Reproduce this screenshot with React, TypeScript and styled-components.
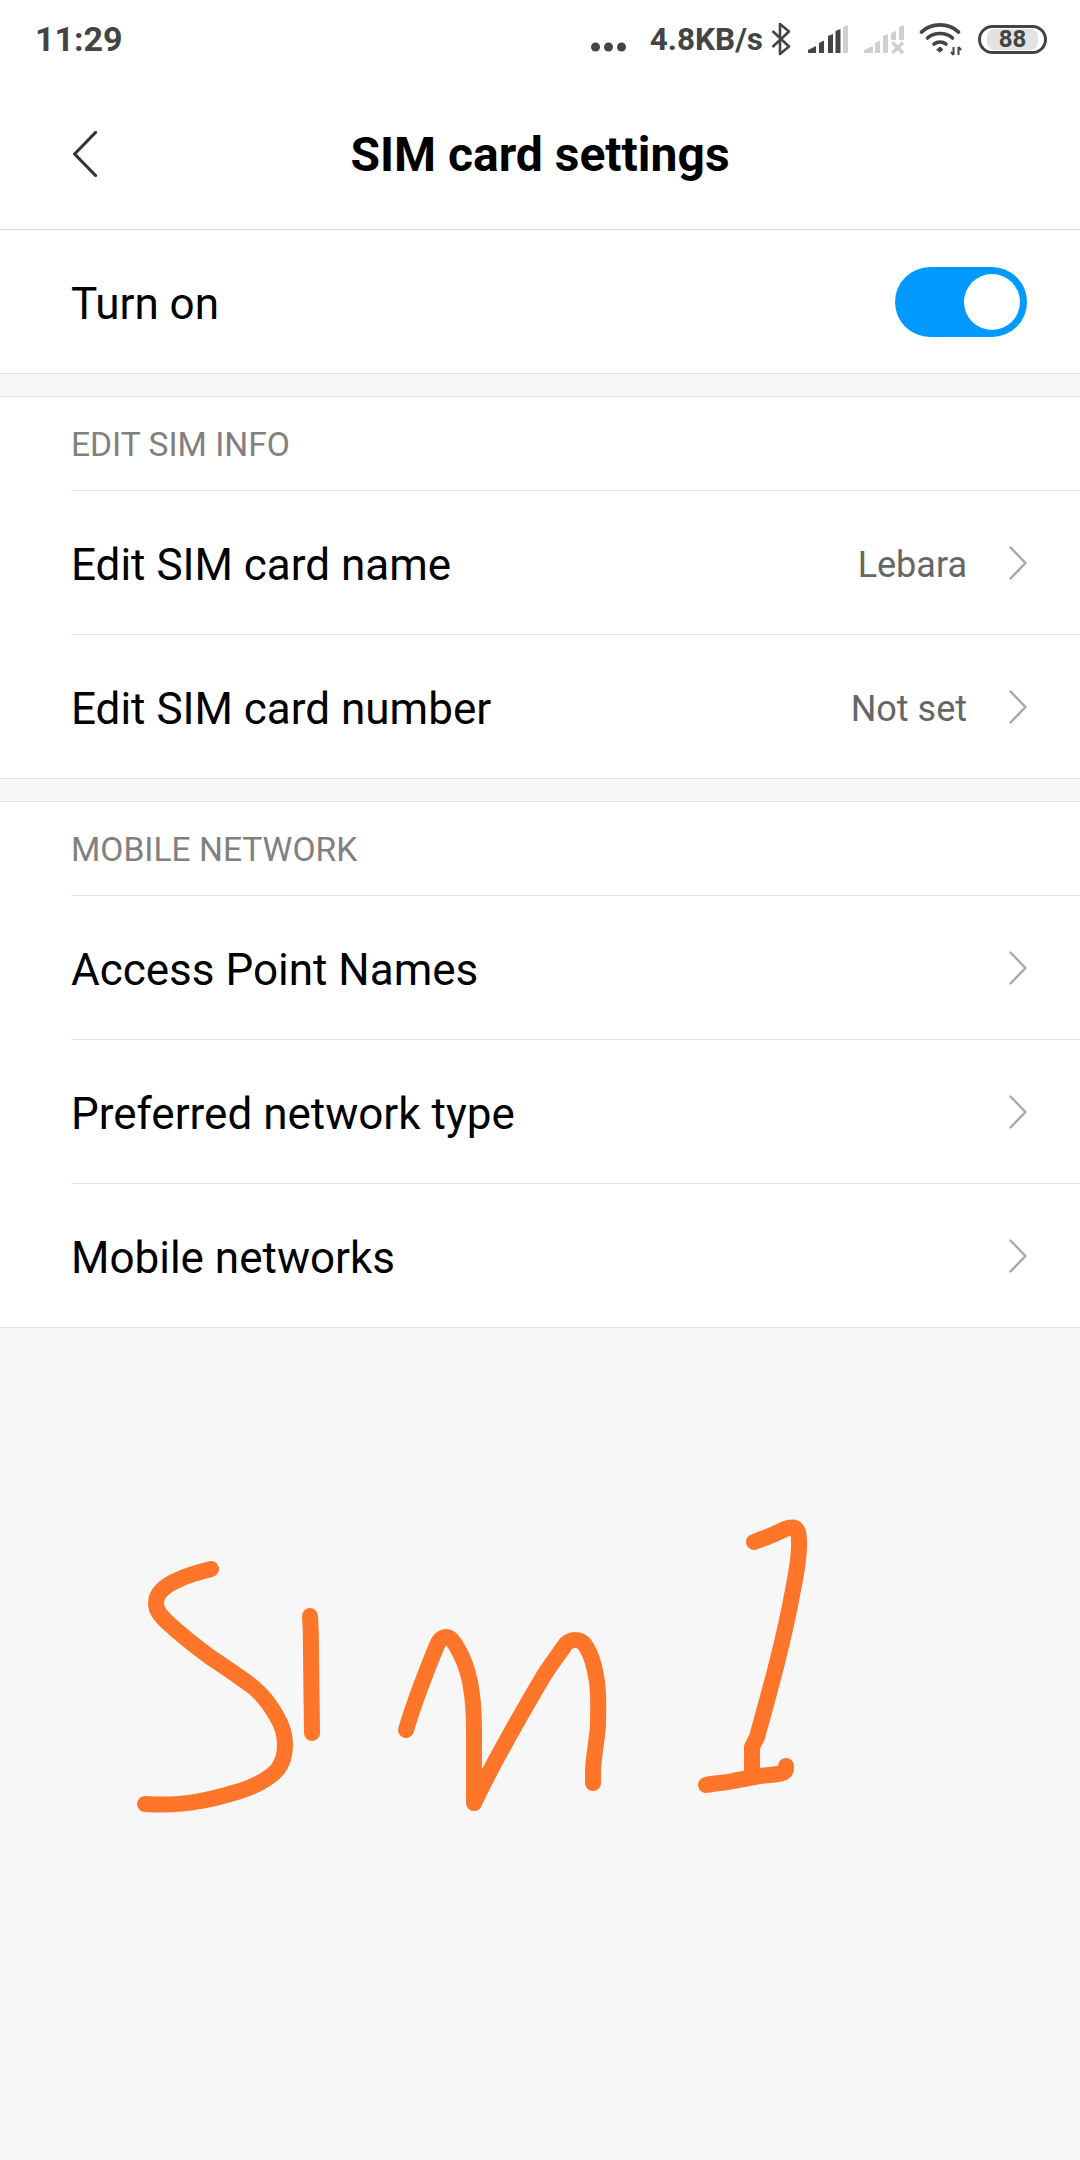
import React from 'react';
import styled, { createGlobalStyle } from 'styled-components';

const GlobalStyle = createGlobalStyle`
  html, body {
    margin: 0;
    padding: 0;
    background: #f7f7f7;
  }
  * {
    box-sizing: border-box;
  }
`;

const Page = styled.div`
  width: 1080px;
  height: 2160px;
  overflow: hidden;
  background: #f7f7f7;
  font-family: Roboto, 'Liberation Sans', sans-serif;
`;

const Top = styled.header`
  height: 230px;
  background: #fff;
  border-bottom: 1px solid #dcdcdc;
`;

const StatusBar = styled.div`
  height: 78px;
  padding: 0 33px 0 35px;
  display: flex;
  align-items: center;
  justify-content: space-between;
  color: #444;
`;

const Time = styled.div`
  font-size: 34px;
  font-weight: 700;
`;

const StatusIcons = styled.div`
  display: flex;
  align-items: center;
`;

const IconSlot = styled.span<{ $gap: number }>`
  display: flex;
  margin-left: ${(p) => p.$gap}px;
`;

const DotsSlot = styled.span`
  display: flex;
  margin-top: 16px;
`;

const Speed = styled.div`
  margin: 0 8px 0 23px;
  font-size: 31.5px;
  font-weight: 700;
`;

const Battery = styled.div`
  width: 69px;
  height: 29px;
  margin-left: 15px;
  padding: 1px 6px;
  border: 3.5px solid #444;
  border-radius: 15px;
`;

const BatteryFill = styled.div`
  height: 100%;
  border-radius: 8px;
  background: #e2e2e2;
  display: flex;
  align-items: center;
  justify-content: center;
  font-size: 24px;
  font-weight: 700;
  line-height: 1;
`;

const NavBar = styled.div`
  height: 151px;
  display: grid;
  grid-template-columns: 1fr auto 1fr;
  align-items: center;
`;

const BackSlot = styled.div`
  display: flex;
  padding-left: 73px;
`;

const Title = styled.h1`
  margin: 0;
  padding-top: 2px;
  font-size: 48px;
  font-weight: 700;
  color: #000;
`;

const Group = styled.section`
  background: #fff;
  border-bottom: 1px solid #e2e2e2;
`;

const SpacedGroup = styled(Group)`
  margin-top: 22px;
  border-top: 1px solid #e2e2e2;
`;

const SectionLabel = styled.div`
  height: 94px;
  margin-left: 71px;
  padding-top: 2px;
  display: flex;
  align-items: center;
  font-size: 33.6px;
  color: #808080;
  border-bottom: 1px solid #e2e2e2;
`;

const Row = styled.div<{ $last?: boolean }>`
  height: ${(p) => (p.$last ? 143 : 144)}px;
  margin-left: 71px;
  padding-right: 53px;
  display: flex;
  align-items: center;
  justify-content: space-between;
  border-bottom: ${(p) => (p.$last ? 'none' : '1px solid #e2e2e2')};
`;

const RowLabel = styled.div`
  padding-top: 4px;
  font-size: 44px;
  color: #000;
`;

const RowRight = styled.div`
  display: flex;
  align-items: center;
  gap: 42px;
`;

const RowValue = styled.div`
  padding-top: 4px;
  font-size: 36px;
  color: #666;
`;

const Toggle = styled.div`
  width: 132px;
  height: 70px;
  padding: 7px;
  border-radius: 35px;
  background: #0099ff;
  display: flex;
  justify-content: flex-end;
`;

const Knob = styled.div`
  width: 56px;
  height: 56px;
  border-radius: 50%;
  background: #fff;
`;

const Note = styled.svg`
  display: block;
`;

const Dots = () => (
  <svg width="36" height="10" viewBox="0 0 36 10">
    <circle cx="4.5" cy="5" r="4.5" fill="#444" />
    <circle cx="17.5" cy="5" r="4.5" fill="#444" />
    <circle cx="30.5" cy="5" r="4.5" fill="#444" />
  </svg>
);

const Bluetooth = () => (
  <svg width="20" height="34" viewBox="0 0 20 34" fill="none" stroke="#444" strokeWidth="2.6">
    <path d="M1.5 9 L18 24.5 L9 32 V2 L18 9.5 L1.5 25" strokeLinejoin="round" />
  </svg>
);

const SignalFull = () => (
  <svg width="40" height="29" viewBox="0 0 40 29">
    <path d="M0 25 L8 21 V28 H0 Z" fill="#444" />
    <path d="M11 18 L16 15.5 V28 H11 Z" fill="#444" />
    <path d="M20 11 L25 9 V28 H20 Z" fill="#444" />
    <path d="M27.5 6 L32.5 4 V28 H27.5 Z" fill="#444" />
    <path d="M35 2 L40 0 V28 H35 Z" fill="#cfcfcf" />
  </svg>
);

const SignalOff = () => (
  <svg width="40" height="29" viewBox="0 0 40 29" fill="#cfcfcf">
    <path d="M0 25 L9 21 V28 H0 Z" />
    <path d="M11 18 L16 15.5 V28 H11 Z" />
    <path d="M19 11 L24 9 V28 H19 Z" />
    <path d="M27 8 L32 6 V15 H27 Z" />
    <path d="M35 2 L40 0 V15 H35 Z" />
    <path d="M28.5 17.5 L39 28 M39 17.5 L28.5 28" stroke="#cfcfcf" strokeWidth="3.4" fill="none" />
  </svg>
);

const Wifi = () => (
  <svg width="44" height="34" viewBox="0 0 44 34" fill="none" stroke="#444" strokeWidth="3.6" strokeLinecap="round">
    <path d="M2.5 10 C12 0.5 30 0.5 39.5 10" />
    <path d="M8.5 16 C15 10 27 10 33.5 16" />
    <path d="M15 22 C18.5 19.5 23.5 19.5 27 22" />
    <path d="M18 27.5 L21 25 L24 27.5 L21 30 Z" fill="#444" strokeWidth="1" />
    <path d="M34.5 25 V33 M32 30 L34.5 33 M39.5 25 V33 M39.5 25 L42 28" strokeWidth="2" strokeLinecap="butt" />
  </svg>
);

const BackArrow = () => (
  <svg width="26" height="46" viewBox="0 0 26 46" fill="none" stroke="#333" strokeWidth="3.2" strokeLinecap="round" strokeLinejoin="round">
    <path d="M22.5 1.5 L1.6 23 L22.5 44.5" />
  </svg>
);

const Chevron = () => (
  <svg width="18" height="34" viewBox="0 0 18 34" fill="none" stroke="#a8a8a8" strokeWidth="2.4" strokeLinecap="round" strokeLinejoin="round">
    <path d="M1.5 1.5 L16.5 17 L1.5 32.5" />
  </svg>
);

const strokes = [
  // S
  'M211 1569 C200 1572 190 1574 180 1579 C168 1584 156 1592 156 1603 C156 1611 161 1616 167 1622 C180 1634 195 1646 210 1657 C225 1667 240 1677 253 1687 C263 1695 271 1706 277 1717 C283 1727 285 1735 285 1745 C285 1755 282 1764 277 1770 C268 1780 255 1786 240 1791 C227 1795 213 1799 200 1801 C180 1805 160 1805 145 1804',
  // i
  'M310 1616 C311 1630 311 1642 311 1655 L312 1733',
  // n
  'M406 1730 C414 1703 424 1677 435 1650 C438 1642 441 1637 446 1637 C450 1637 452 1640 455 1644 C462 1655 467 1667 470 1682 C473 1697 474 1712 474 1730 L474 1803 C492 1765 520 1716 543 1677 C549 1667 556 1658 563 1648 C566 1643 569 1640 575 1640 C580 1640 582 1641 585 1645 C592 1655 595 1668 597 1682 C599 1697 598 1712 598 1725 C597 1740 593 1760 593 1772 L593 1783',
  // 1
  'M754 1542 C765 1538 775 1534 785 1529 C790 1527 795 1527 796 1529 C799 1532 799 1538 799 1545 C799 1560 796 1575 793 1590 C784 1640 770 1690 757 1737 L752 1747 L752 1775',
  'M706 1785 C715 1783 725 1783 733 1781 C742 1779 751 1778 760 1776 C767 1775 775 1775 782 1773 C786 1772 786 1770 786 1766',
];

const App = () => (
  <>
    <GlobalStyle />
    <Page>
      <Top>
        <StatusBar>
          <Time>11:29</Time>
          <StatusIcons>
            <DotsSlot>
              <Dots />
            </DotsSlot>
            <Speed>4.8KB/s</Speed>
            <Bluetooth />
            <IconSlot $gap={17}>
              <SignalFull />
            </IconSlot>
            <IconSlot $gap={16}>
              <SignalOff />
            </IconSlot>
            <IconSlot $gap={15}>
              <Wifi />
            </IconSlot>
            <Battery>
              <BatteryFill>88</BatteryFill>
            </Battery>
          </StatusIcons>
        </StatusBar>
        <NavBar>
          <BackSlot>
            <BackArrow />
          </BackSlot>
          <Title>SIM card settings</Title>
        </NavBar>
      </Top>

      <Group>
        <Row $last>
          <RowLabel>Turn on</RowLabel>
          <Toggle>
            <Knob />
          </Toggle>
        </Row>
      </Group>

      <SpacedGroup>
        <SectionLabel>EDIT SIM INFO</SectionLabel>
        <Row>
          <RowLabel>Edit SIM card name</RowLabel>
          <RowRight>
            <RowValue>Lebara</RowValue>
            <Chevron />
          </RowRight>
        </Row>
        <Row $last>
          <RowLabel>Edit SIM card number</RowLabel>
          <RowRight>
            <RowValue>Not set</RowValue>
            <Chevron />
          </RowRight>
        </Row>
      </SpacedGroup>

      <SpacedGroup>
        <SectionLabel>MOBILE NETWORK</SectionLabel>
        <Row>
          <RowLabel>Access Point Names</RowLabel>
          <Chevron />
        </Row>
        <Row>
          <RowLabel>Preferred network type</RowLabel>
          <Chevron />
        </Row>
        <Row $last>
          <RowLabel>Mobile networks</RowLabel>
          <Chevron />
        </Row>
      </SpacedGroup>

      <Note width="1080" height="832" viewBox="0 1328 1080 832" fill="none" stroke="#ff752a" strokeWidth="16" strokeLinecap="round" strokeLinejoin="round">
        {strokes.map((d) => (
          <path key={d} d={d} />
        ))}
      </Note>
    </Page>
  </>
);

export default App;
